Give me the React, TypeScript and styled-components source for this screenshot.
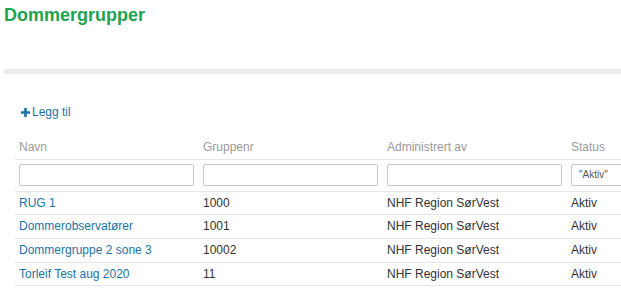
import React from "react";
import styled, { createGlobalStyle } from "styled-components";

const GlobalStyle = createGlobalStyle`
  html, body {
    margin: 0;
    padding: 0;
    background: #ffffff;
    overflow: hidden;
  }
  body {
    font-family: "Liberation Sans", Arial, sans-serif;
    font-size: 12px;
    color: #333333;
  }
`;

const Page = styled.div`
  padding: 0 0 0 4px;
  width: 740px;
`;

const Title = styled.h1`
  margin: 5px 0 0;
  font-size: 18px;
  line-height: 20px;
  font-weight: bold;
  color: #21a351;
`;

const Divider = styled.div`
  margin-top: 44px;
  height: 5px;
  background: #ebebeb;
`;

const Content = styled.div`
  padding: 30px 0 0 11px;
`;

const AddButton = styled.a`
  display: inline-flex;
  align-items: center;
  gap: 2px;
  padding-left: 6px;
  height: 16px;
  line-height: 16px;
  font-size: 12px;
  color: #1b73a8;
  text-decoration: none;
  cursor: pointer;
`;

const Table = styled.table`
  margin-top: 16px;
  border-collapse: collapse;
  table-layout: fixed;
  width: 736px;
`;

const HeadCell = styled.th`
  box-sizing: border-box;
  width: 184px;
  padding: 5px 4px;
  line-height: 12.67px;
  text-align: left;
  font-weight: normal;
  font-size: 12px;
  color: #9a9a9a;
  border-bottom: 1px solid #e6e6e6;
`;

const FilterCell = styled.td`
  padding: 4px 5px 5px 4px;
  border-bottom: 1px solid #e6e6e6;
`;

const FilterInput = styled.input`
  box-sizing: border-box;
  display: block;
  width: 100%;
  height: 22px;
  margin: 0;
  padding: 0 7px;
  border: 1px solid #c9c9c9;
  border-radius: 2px;
  font-family: "Liberation Sans", Arial, sans-serif;
  font-size: 10px;
  color: #555555;
  background: #ffffff;
  outline: none;
  &::placeholder {
    color: #555555;
  }
`;

const Row = styled.tr`
  border-bottom: 1px solid #e6e6e6;
`;

const Cell = styled.td<{ $link?: boolean }>`
  padding: 5px 4px;
  line-height: 12.67px;
  font-size: 12px;
  white-space: nowrap;
  color: ${(p) => (p.$link ? "#1b73a8" : "#333333")};
`;

const PlusIcon = () => (
  <svg width="9" height="9" viewBox="0 0 9 9" aria-hidden="true">
    <path d="M3.2 0h2.6v3.2H9v2.6H5.8V9H3.2V5.8H0V3.2h3.2z" fill="#1b73a8" />
  </svg>
);

const rows = [
  { name: "RUG 1", nr: "1000", admin: "NHF Region SørVest", status: "Aktiv" },
  { name: "Dommerobservatører", nr: "1001", admin: "NHF Region SørVest", status: "Aktiv" },
  { name: "Dommergruppe 2 sone 3", nr: "10002", admin: "NHF Region SørVest", status: "Aktiv" },
  { name: "Torleif Test aug 2020", nr: "11", admin: "NHF Region SørVest", status: "Aktiv" },
];

export default function App() {
  return (
    <>
      <GlobalStyle />
      <Page>
        <Title>Dommergrupper</Title>
        <Divider />
        <Content>
          <AddButton>
            <PlusIcon />
            Legg til
          </AddButton>
          <Table>
            <thead>
              <tr>
                <HeadCell>Navn</HeadCell>
                <HeadCell>Gruppenr</HeadCell>
                <HeadCell>Administrert av</HeadCell>
                <HeadCell>Status</HeadCell>
              </tr>
              <tr>
                <FilterCell><FilterInput /></FilterCell>
                <FilterCell><FilterInput /></FilterCell>
                <FilterCell><FilterInput /></FilterCell>
                <FilterCell><FilterInput placeholder={'"Aktiv"'} /></FilterCell>
              </tr>
            </thead>
            <tbody>
              {rows.map((r) => (
                <Row key={r.name}>
                  <Cell $link>{r.name}</Cell>
                  <Cell>{r.nr}</Cell>
                  <Cell>{r.admin}</Cell>
                  <Cell>{r.status}</Cell>
                </Row>
              ))}
            </tbody>
          </Table>
        </Content>
      </Page>
    </>
  );
}
